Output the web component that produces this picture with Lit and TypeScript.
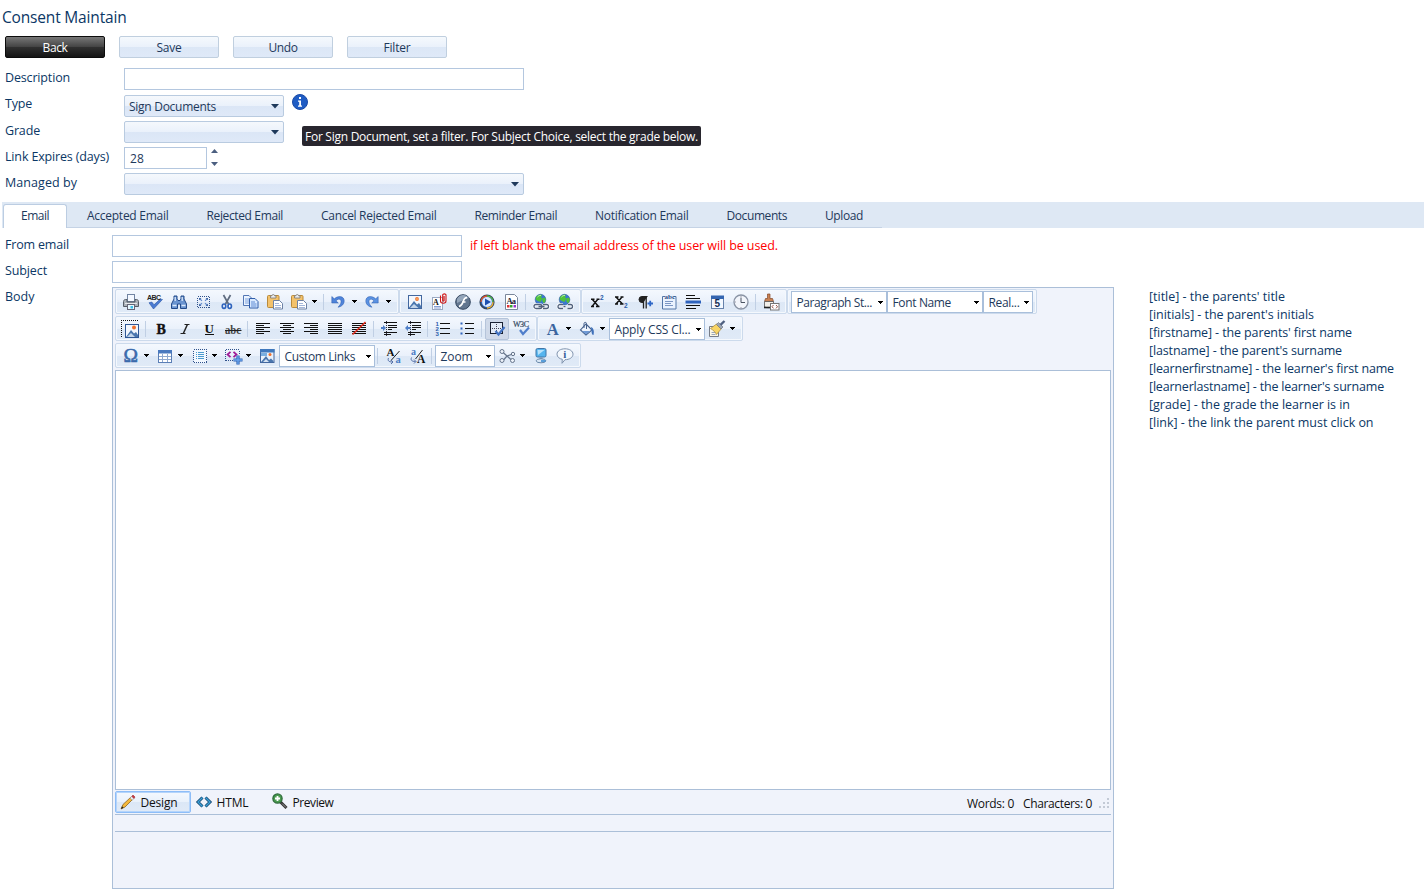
import { LitElement, html, svg, css, nothing } from "lit";
import { customElement, property } from "lit/decorators.js";

/* Text run whose tracking is computed so that it fills a given width. */
@customElement("fit-text")
class FitText extends LitElement {
  @property({ type: Number }) w = 0;
  static styles = css`
    :host { display: inline-block; white-space: pre; }
    span { display: inline-block; }
  `;
  firstUpdated() {
    const span = this.renderRoot.querySelector("span") as HTMLElement;
    const n = (this.textContent || "").length;
    const natural = span.getBoundingClientRect().width;
    if (n && natural && this.w) {
      const ls = (this.w - natural) / n;
      span.style.letterSpacing = ls.toFixed(3) + "px";
    }
  }
  render() {
    return html`<span><slot></slot></span>`;
  }
}

const t = (text: string, w: number) => html`<fit-text .w=${w}>${text}</fit-text>`;

const page = svg`<path d="M3.5 1.5h7l3 3v10h-10z" fill="#fff" stroke="#6c7f9c"/>`;
const globe = svg`<circle cx="7.500" cy="5.600" r="5.300" fill="#3c78d0" stroke="#2c5a9c" stroke-width=".6"/><path d="M3 3c2-2.500 5-2.500 6-2l-1 2.300 1.400 1.200-2 3.400-2.500-.8-2.200-1.600zM9.300 4.500l2.600-1 1 2.400-1.600 3.400-1.800-1.600z" fill="#4fc33a"/><path d="M4.500 3c1-1.300 2.500-1.700 3.500-1.500" stroke="#c9f2c0" fill="none"/>`;
const clip = svg`<rect x=".5" y="1.500" width="11.500" height="12" rx="1" fill="#f3c26c" stroke="#b98a3a"/><path d="M3.500 4V1.800h1.300C5 .1 7.500.1 7.700 1.800H9V4z" fill="#ececec" stroke="#777" stroke-width=".8"/><path d="M6.500 6.500h6l3 3v5.500h-9z" fill="#fff" stroke="#6d82a6"/><path d="M8 9.500h4M8 11.500h6M8 13.500h6" stroke="#8ba4d0" stroke-width=".8"/>`;
const picture = svg`<rect x="1.500" y="1.500" width="13" height="13" fill="#f3f7fd" stroke="#42679f"/><circle cx="10" cy="5" r="1.900" fill="#f0702c"/><circle cx="10" cy="5" r=".8" fill="#fbd08c"/><path d="M2 13.500 7 7l3 3.500L12 9l2 3v2H2z" fill="#4a76ae"/><path d="M3 14 7 10l4.500 4z" fill="#c3d5ea"/>`;
const lines = (xs: [number, number][]) =>
  svg`<g fill="#111" shape-rendering="crispEdges">${xs.map(([x, w], i) => svg`<rect x=${x} y=${2 + i * 2} width=${w} height="1"/>`)}</g>`;

const I: Record<string, unknown> = {
  print: svg`<rect x="4.500" y=".5" width="7" height="7" fill="#f4f8ff" stroke="#7184a2"/><path d="M.5 7.500c0-1 .8-2 2-2H4V8h8V5.500h1.500c1.200 0 2 1 2 2v5H.5z" fill="#aab0b8" stroke="#555c66"/><path d="M2 9.500h12" stroke="#e6e8ea"/><rect x="4.500" y="10.500" width="7" height="5" fill="#e8f8ff" stroke="#667"/><rect x="7.500" y="12" width="2.500" height="2.500" fill="#3bc0ea"/>`,
  spell: svg`<path d="M2 8.800 6.500 15 15.500 5.500l-2.500-.3-6 5.600-2.200-2.800z" fill="#4a7bd2" stroke="#2c55a4" stroke-width=".6"/><text x="0" y="5.500" font-size="7" font-weight="700" fill="#222" textLength="14" font-family="Liberation Sans">ABC</text>`,
  find: svg`<path d="M3 2h3v3l1 1.500h2L10 5V2h3v3l2.500 5v4.500h-6V10h-3v4.500h-6V10L3 5z" fill="#6a94d0" stroke="#234a8a"/><path d="M1.500 11.500h4M10.500 11.500h4M4.200 3v4M11.200 3v4" stroke="#dce9fb" stroke-width="1.300"/>`,
  selectall: svg`<g shape-rendering="crispEdges"><rect x="2.500" y="2.500" width="12" height="11" fill="none" stroke="#30528c" stroke-dasharray="1 1"/></g><path d="m4.500 4.500 2.500 2.300M12.500 4.500 10 6.800M4.500 11.500 7 9.200M12.500 11.500 10 9.200" stroke="#5f88cc" stroke-width="1.100"/><path d="M4 4h2.500L4 6.200zM13 4h-2.500L13 6.200zM4 12h2.500L4 9.800zM13 12h-2.500L13 9.800z" fill="#3d64a4"/>`,
  cut: svg`<path d="M4.500 1 9.500 10M11.500 1 6.500 10" stroke="#5f6c80" stroke-width="1.700" fill="none"/><ellipse cx="5" cy="12.200" rx="1.700" ry="2.200" fill="#fff" stroke="#2e63bd" stroke-width="1.700"/><ellipse cx="10.700" cy="12.200" rx="1.700" ry="2.200" fill="#fff" stroke="#2e63bd" stroke-width="1.700"/>`,
  copy: svg`<path d="M.5 1.500h5.500l3 3v7H.5z" fill="#eaf3ff" stroke="#5276b5"/><path d="M2 5h4M2 7h5M2 9h5" stroke="#7fa2dc"/><path d="M6.500 4.500H12l3 3v6.500H6.500z" fill="#d9e9ff" stroke="#2f5daa"/><path d="M8 8h4M8 10h5.500M8 12h5.500" stroke="#5e8bd3"/>`,
  paste: clip,
  undo: svg`<path d="M.8 2.500v6.500h6.500L5 6.800C7.500 4 10.500 5 10 8.200c-.3 2-1.500 3.500-3 5C11 12.500 13.200 10 13.200 6.700 13.200 2.300 7.500 1 3.300 4.800z" fill="#4f84da" stroke="#2a59ab" stroke-width=".5"/>`,
  redo: svg`<path d="M13.200 2.500v6.500H6.700L9 6.800C6.500 4 3.500 5 4 8.200c.3 2 1.500 3.500 3 5C3 12.500 .8 10 .8 6.700.8 2.300 6.500 1 10.700 4.800z" fill="#5a92e2" stroke="#2a59ab" stroke-width=".5"/>`,
  image: picture,
  doc: svg`<rect x="1.500" y="3.500" width="10" height="12" fill="#fff" stroke="#9aa9c2"/><text x="2" y="11" font-size="8" font-weight="700" fill="#111" font-family="Liberation Serif">A</text><path d="M3 12.500h7M3 14h7" stroke="#6787c8" stroke-width=".8"/><path d="M9.500 1.500V7c0 3 5.500 3 5.500 0V1c0-1.500-3.300-1.500-3.300 0v5.500c0 .8 1.400.8 1.400 0V2" fill="none" stroke="#d01818" stroke-width="1.100"/>`,
  flash: svg`<circle cx="8" cy="8" r="7.300" fill="#62768f" stroke="#33465f"/><path d="M2 5a7 7 0 0 1 12-1C10 5 6 7 2 9z" fill="#93a5ba"/><path d="M12 3.500c-3.500.4-3 2.500-4 4.500-.7 1.800-1.500 4-4 4.500M7 8h3.500" stroke="#fff" stroke-width="1.600" fill="none"/>`,
  media: svg`<circle cx="8" cy="8" r="6.700" fill="#2f6fd6" stroke="#33465f" stroke-width="1.800"/><path d="M8 2a6 6 0 0 1 6 6" stroke="#56b946" stroke-width="1.300" fill="none"/><path d="M14 8a6 6 0 0 1-6 6" stroke="#f0b030" stroke-width="1.300" fill="none"/><path d="M2 8a6 6 0 0 1 6-6" stroke="#e2562c" stroke-width="1.300" fill="none"/><circle cx="8" cy="8" r="4.900" fill="#dceafd"/><path d="M6 4.500 12 8l-6 3.500z" fill="#1d50b0"/>`,
  template: svg`<path d="M2.500.5h9l3 3v12h-12z" fill="#fff" stroke="#7a879b"/><text x="3.500" y="9.500" font-size="8.500" font-weight="700" fill="#223" font-family="Liberation Serif" textLength="9.500">Aa</text><rect x="4" y="11" width="2.500" height="2.500" fill="#d33"/><rect x="7" y="11" width="2.500" height="2.500" fill="#3a3"/><rect x="10.500" y="11" width="2.500" height="2.500" fill="#93c"/>`,
  link: svg`${globe}<path d="M3 10.500h4a2 2 0 0 1 0 4H3a2 2 0 0 1 0-4zM10 10.500h3.500a2 2 0 0 1 0 4H10M5.500 12.500h6" fill="none" stroke="#fff" stroke-width="2.600"/><path d="M3 10.500h4a2 2 0 0 1 0 4H3a2 2 0 0 1 0-4zM10 10.500h3.500a2 2 0 0 1 0 4H10M5.500 12.500h6" fill="none" stroke="#50617c" stroke-width="1.300"/>`,
  unlink: svg`${globe}<path d="M6 10.500H3a2 2 0 0 0 0 4h3M11 10.500h2.500a2 2 0 0 1 0 4H10.500M6.500 12.500h2" fill="none" stroke="#fff" stroke-width="2.600"/><path d="M6 10.500H3a2 2 0 0 0 0 4h3M11 10.500h2.500a2 2 0 0 1 0 4H10.500M6.500 12.500h2" fill="none" stroke="#50617c" stroke-width="1.300"/>`,
  sup: svg`<path d="M3 5 9.500 12.500M9 5 3 12.500M2 5.200h3.500M7.500 5.200h3M2 12.500h3M7 12.500h3.500" stroke="#111" stroke-width="1.400"/><text x="11" y="6" font-size="6.500" font-weight="700" fill="#2b5caa" font-family="Liberation Sans">2</text>`,
  sub: svg`<path d="M3 3 9.500 10M9 3 3 10M2 3h3.500M7.500 3h3M2 10h3M7 10h3.500" stroke="#111" stroke-width="1.400"/><text x="11" y="13.500" font-size="6.500" font-weight="700" fill="#2b5caa" font-family="Liberation Sans">2</text>`,
  para: svg`<path d="M10.500 2.500H5a3 3 0 0 0 0 6h1.500" fill="#222" stroke="#222"/><path d="M6.500 3v11.500M9.200 3v11.500" stroke="#222" stroke-width="1.300"/><path d="M10.500 9.500h5.500M13.200 6.800v5.500" stroke="#2e66c6" stroke-width="1.800"/>`,
  abc: svg`<path d="M1.500 2.500h13.500v12.500H1.500z" fill="#eaf3ff" stroke="#5276a8"/><path d="M4 7.500h8M4 9.500h6M4 11.500h8" stroke="#7c97c4"/><rect x="4" y="0" width="8.500" height="5" fill="#eaf3ff"/><text x="3.500" y="4.500" font-size="7" font-weight="700" fill="#2c4f86" font-family="Liberation Serif">abc</text>`,
  hr: svg`<path d="M1 1.500h9M1 4.500h14M1 11.500h14M1 14.500h10" stroke="#111"/><path d="M.5 8h15.500" stroke="#2e63bd" stroke-width="3"/>`,
  date: svg`<rect x="2.500" y="2.500" width="12" height="12" fill="#f4f8ff" stroke="#6682ab"/><rect x="2" y="1.500" width="13" height="3.500" fill="#3465b0"/><text x="5.500" y="13.300" font-size="10" font-weight="700" fill="#172d55" font-family="Liberation Sans">5</text>`,
  clock: svg`<circle cx="8" cy="8" r="7" fill="#f2f5fb" stroke="#8a94a5" stroke-width="1.300"/><path d="M8 3.500V8.500h4" stroke="#4a5362" fill="none"/><path d="M8 1.800v1M8 13.200v1M1.800 8h1" stroke="#889"/>`,
  clean: svg`<path d="M4.500 0H7v4.500h2.500l1 3h-9l1-3h2z" fill="#c98253" stroke="#84492a" stroke-width=".7"/><path d="M1.500 7.500h9v5c-2 1.500-7 1.500-9 .5z" fill="#f2efe9" stroke="#555" stroke-width=".8"/><path d="M1 13.500h6.500" stroke="#222" stroke-width="1.600"/><rect x="7.500" y="9.500" width="8.500" height="6.500" fill="#fff" stroke="#777"/><path d="m10.500 11-1.500 1.700 1.500 1.700M13 11l1.500 1.700-1.500 1.700" stroke="#8a4030" fill="none" stroke-width=".9"/>`,
  editor: svg`<path d="M-1.500 16V-.5H16" fill="none" stroke="#111" stroke-dasharray="1 1" shape-rendering="crispEdges"/><rect x="2.500" y="3.500" width="13" height="13" fill="#f3f7fd" stroke="#2f5795"/><circle cx="11" cy="6.500" r="2" fill="#f0702c"/><path d="M3 16 8 9l3 3.500L13 11l2 3v2z" fill="#4a76ae"/><path d="M4 16 8 12l4 4z" fill="#c3d5ea"/>`,
  bold: svg`<text x="3.500" y="13" font-size="14" font-weight="700" fill="#111" stroke="#111" stroke-width=".4" font-family="Liberation Serif">B</text>`,
  italic: svg`<path d="M10.300 3.800 6.300 12.500" stroke="#222" stroke-width="1.500"/><path d="M7.500 3.500h5M3.500 12.500h5" stroke="#222"/>`,
  underline: svg`<text x="3.500" y="11.500" font-size="13" font-weight="700" fill="#111" font-family="Liberation Serif">U</text><path d="M4 13.500h9" stroke="#111"/>`,
  strike: svg`<text x="0" y="13" font-size="12" font-weight="700" fill="#444" font-family="Liberation Serif" textLength="16" lengthAdjust="spacingAndGlyphs">abc</text><path d="M0 9.500h16.500" stroke="#222"/>`,
  left: lines([[1, 14], [1, 8], [1, 14], [1, 8], [1, 14], [1, 8]]),
  center: lines([[1, 14], [4, 8], [1, 14], [4, 8], [1, 14], [4, 8]]),
  right: lines([[1, 14], [7, 8], [1, 14], [7, 8], [1, 14], [7, 8]]),
  full: lines([[1, 14], [1, 14], [1, 14], [1, 14], [1, 14], [1, 14]]),
  none: svg`${lines([[1, 14], [1, 14], [1, 14], [1, 14], [1, 14], [1, 14]])}<path d="M1.500 13.500 14.500 1" stroke="#e02a1a" stroke-width="1.600"/>`,
  outdent: svg`<g shape-rendering="crispEdges" fill="#111"><path d="M3 1h13v1H3zM7 4h9v1H7zM7 6h9v1H7zM7 8h4v1H7zM3 11h13v1H3zM3 13h7v1H3z"/><path d="M5.500 0v15" stroke="#334" stroke-dasharray="1 1"/></g><path d="M0 7h3" stroke="#4f7fc8" stroke-width="2"/><path d="M2 4 5 7 2 10z" fill="#4f7fc8"/>`,
  indent: svg`<g shape-rendering="crispEdges" fill="#111"><path d="M3 1h13v1H3zM7 4h9v1H7zM7 6h9v1H7zM7 8h4v1H7zM3 11h13v1H3zM3 13h7v1H3z"/><path d="M5.500 0v15" stroke="#334" stroke-dasharray="1 1"/></g><path d="M2.500 7h3" stroke="#4f7fc8" stroke-width="2"/><path d="M3 4 0 7l3 3z" fill="#4f7fc8"/>`,
  ol: svg`<path d="M5 2.500h10M5 7.500h10M5 12.500h10" stroke="#111"/><g font-size="6" font-weight="700" fill="#2b5caa" font-family="Liberation Sans"><text x=".5" y="4.500">1</text><text x=".5" y="9.500">2</text><text x=".5" y="14.500">3</text></g>`,
  ul: svg`<path d="M6 2.500h9M6 7.500h9M6 12.500h9" stroke="#111"/><path d="M1.500 1.500h2v2h-2zM1.500 6.500h2v2h-2zM1.500 11.500h2v2h-2z" fill="#2e63bd"/>`,
  borders: svg`<rect x="1.500" y="1.500" width="12" height="11" fill="#e3ebf7" stroke="#1a2233"/><path d="M3 7.500h10M7.500 3v9" stroke="#445" stroke-dasharray="1 1"/><path d="M6.500 10 9.500 13.500l6-7.500" stroke="#4272c2" stroke-width="2.200" fill="none"/>`,
  w3c: svg`<text x="0" y="6" font-size="8" fill="#33485f" stroke="#33485f" stroke-width=".2" font-family="Liberation Serif" textLength="16">W3C</text><path d="M7 9 10 13 16 6.500" stroke="#4f7ecb" stroke-width="2.200" fill="none"/>`,
  color: svg`<text x="1.800" y="13.500" font-size="17" font-weight="700" fill="#3a659f" font-family="Liberation Serif" textLength="12" lengthAdjust="spacingAndGlyphs">A</text>`,
  fill: svg`<path d="M7 3 13 9l-6 5-5.500-5z" fill="#eef4fd" stroke="#45618d" stroke-width="1.100"/><path d="M3 10h8.500L7 13.500z" fill="#6e98d4"/><path d="M5 7V2.500c0-1.500 2.500-1.500 2.500 0V8" fill="none" stroke="#45618d"/><path d="M12 6c2.500 1 3.500 4 2.500 8-1.500 0-2-2-2-4.500z" fill="#3e70ba"/>`,
  brush: svg`<path d="M.5 5.500h9v10h-9z" fill="#fbf7e6" stroke="#777d88"/><path d="M2.500 11.500h5M2.500 13.500h4" stroke="#9aa7ba"/><path d="M1.500 7.500 7.500 3l5 4.500-5 6c-1-2.500-3.500-4.500-6-6z" fill="#f8d566" stroke="#a98a3c" stroke-width=".7"/><path d="M7.500 3.500l4.500 4.500 2-2-4.500-4.500z" fill="#9da5b3" stroke="#626978" stroke-width=".6"/><path d="M11.500 3.800 15.500 0" stroke="#4d5f80" stroke-width="2.400"/>`,
  omega: svg`<text x=".5" y="14" font-size="19" fill="#3a6aac" stroke="#3a6aac" stroke-width=".6" font-family="Liberation Serif" textLength="14.500" lengthAdjust="spacingAndGlyphs">Ω</text>`,
  table: svg`<rect x="1.500" y="2.500" width="13" height="12" fill="#fff" stroke="#5b7fb6"/><path d="M1 2h14v3.500H1z" fill="#4979bf"/><path d="M2 8.500h12M2 11.500h12M5.500 6v8M10.500 6v8" stroke="#8fa9d0"/>`,
  block: svg`<rect x="2.500" y="1.500" width="13" height="13" fill="#f2f8ff" stroke="#30528c" stroke-dasharray="1 1" shape-rendering="crispEdges"/><path d="M5 4.500h1M5 6.500h1M5 8.500h1M5 10.500h1M7 4.500h6M7 6.500h6M7 8.500h6M7 10.500h6" stroke="#4b9bd0"/>`,
  snippet: svg`<path d="M.5 13V1.500H14V7M.5 12.500h8" fill="none" stroke="#30528c" stroke-dasharray="1 1" shape-rendering="crispEdges"/><path d="M5.500 3.800 2.500 6.500l3 2.700M8.500 3.800l3 2.700-3 2.700" stroke="#a01a96" stroke-width="1.800" fill="none"/><path d="M8.500 12h9M13 7.500v9" stroke="#2d62b4" stroke-width="3.200"/><path d="M9 12h8M13 8v8" stroke="#6aa4ec" stroke-width="1.400"/>`,
  map: svg`<rect x="1.500" y="1.500" width="13.500" height="13" fill="#e9f1fb" stroke="#42679f"/><path d="M1 1h14.500v3.500H1z" fill="#3f78bd"/><path d="M2 5h6v3H2z" fill="#79aee0"/><circle cx="11" cy="6.500" r="1.500" fill="#f0702c"/><path d="M2 14 7 8l3 4 2-1.500 2.500 2.500v1z" fill="#4a76ae"/><path d="M4 14l3-3 3 3z" fill="#d4e2f2"/>`,
  lower: svg`<text x="1.500" y="7.500" font-size="11" font-weight="700" fill="#111" font-family="Liberation Serif">A</text><text x="10.500" y="14.500" font-size="10.500" font-weight="700" fill="#4a7cc4" font-family="Liberation Serif">a</text><path d="M14.500 3 6 12.500" stroke="#222"/><path d="M3.500 10c-1 2.500 0 4 4 4M6 12l2 2-2 2" stroke="#5570a8" fill="none"/>`,
  upper: svg`<text x="2" y="6.500" font-size="10" font-weight="700" fill="#4a7cc4" font-family="Liberation Serif">a</text><text x="8" y="14.500" font-size="11.500" font-weight="700" fill="#111" font-family="Liberation Serif">A</text><path d="M13.500 2 6.500 11" stroke="#222"/><path d="M2.500 9.500c-1 2.500 0 4 4 4M5 11.500l2 2-2 2" stroke="#5570a8" fill="none"/>`,
  xform: svg`<path d="M3 3.500 8 8l6-2M8 8 4 12.500M8 8l5 4.500" stroke="#66758c" stroke-width="1.200" fill="none"/><g fill="#edf2fa" stroke="#66758c"><circle cx="3" cy="3.500" r="2"/><circle cx="3" cy="12.500" r="2"/><circle cx="13.500" cy="12.500" r="2"/><circle cx="14" cy="6" r="1.700"/></g>`,
  monitor: svg`<rect x="3" y=".5" width="10" height="8.500" rx="1.500" fill="#55b4ee" stroke="#4176a8"/><path d="M4.500 2h7L5 7z" fill="#b8e2fb"/><path d="M6.500 9.500h3v2h-3z" fill="#7590ae"/><ellipse cx="8" cy="12.800" rx="4.800" ry="2" fill="#d9e7f5" stroke="#6988aa"/><path d="M8 13h4.500" stroke="#2f87d2" stroke-width="1.500"/>`,
  about: svg`<path d="M8 .8c4.500 0 8 2.200 8 5.400s-3.500 5.500-8 5.500L5 15.300l.3-4C2.500 10.800 0 9 0 6.200 0 3 3.500.8 8 .8z" fill="#f4f8fd" stroke="#7f93ae"/><text x="6.300" y="10.300" font-size="11" font-weight="700" fill="#375f9b" font-family="Liberation Serif">i</text>`,
  pencil: svg`<path d="M1 15 3 10.500l8-7.500 2 2-8 8z" fill="#f5b83a" stroke="#8d6620" stroke-width=".8"/><path d="m1 15 1-2.700 1.700 1.500z" fill="#222"/><path d="m10 4 2.200 2.200L14 4.500 11.800 2.200z" fill="#e8eaf0" stroke="#888" stroke-width=".5"/><path d="M11.800 2.200 13 1l2 2-1 1.500z" fill="#d0333c" stroke="#8c2026" stroke-width=".5"/>`,
  code: svg`<path d="M6.500 3.500 2 8l4.500 4.500M9.500 3.500 14 8l-4.500 4.500" fill="none" stroke="#16466f" stroke-width="3"/><path d="M6.500 3.500 2 8l4.500 4.500M9.500 3.500 14 8l-4.500 4.500" fill="none" stroke="#3ba0d8" stroke-width="1.400"/>`,
  zoom: svg`<path d="m8.500 8 6 6" stroke="#333" stroke-width="3"/><path d="m10 9.500 4 4" stroke="#999" stroke-width="1"/><circle cx="5.500" cy="4.500" r="4.600" fill="#4a9b50" stroke="#2c6a38" stroke-width="1.300"/><path d="M3 4.500h5M5.500 2v5" stroke="#fff" stroke-width="1.800"/>`,
};

const icon = (name: string) =>
  html`<svg class="ico" viewBox="0 0 16 16" width="16" height="16">${I[name] ?? page}</svg>`;
const arrow = html`<svg class="arr" width="5" height="3" viewBox="0 0 5 3"><path d="M0 0h5v1H4v1H3v1H2V2H1V1H0z" fill="#000"/></svg>`;

type Item = string | [string, number, number];
const toolbars: Item[][][] = [
  [
    ["print", "spell", "find", "selectall", "cut", "copy", "paste", "paste+", "|", "undo+", "redo+"],
    ["image", "doc", "flash", "media", "template", "|", "link", "unlink"],
    ["sup", "sub", "para", "abc", "hr", "date", "clock", "|", "clean"],
    [["Paragraph St...", 96, 75.5], ["Font Name", 96, 58.5], ["Real...", 50, 31]],
  ],
  [
    ["editor", "|", "bold", "italic", "underline", "strike", "|", "left", "center", "right", "full", "none", "|", "outdent", "indent", "|", "ol", "ul", "|", "borders", "w3c"],
    ["color+", "fill+", ["Apply CSS Cl...", 96, 76], "brush+"],
  ],
  [
    ["omega+", "table+", "block+", "snippet+", "map", ["Custom Links", 96, 70.5], "|", "lower", "upper", "|", ["Zoom", 60, 32], "xform+", "monitor", "about"],
  ],
];

const item = (i: Item) => {
  if (typeof i !== "string")
    return html`<div class="combo" style="width:${i[1]}px">${t(i[0], i[2])}${arrow}</div>`;
  if (i === "|") return html`<i class="sep"></i>`;
  const split = i.endsWith("+");
  return html`<div class="tool ${split ? "split" : ""} ${i === "borders" ? "on" : ""}">
    ${icon(split ? i.slice(0, -1) : i)}${split ? arrow : nothing}
  </div>`;
};

const tabs: [string, number][] = [
  ["Email", 28], ["Accepted Email", 81.5], ["Rejected Email", 76.5], ["Cancel Rejected Email", 115.5],
  ["Reminder Email", 82.500], ["Notification Email", 93.500], ["Documents", 60.500], ["Upload", 38],
];
const legend: [string, number][] = [
  ["[title] - the parents' title", 136], ["[initials] - the parent's initials", 165],
  ["[firstname] - the parents' first name", 203], ["[lastname] - the parent's surname", 193],
  ["[learnerfirstname] - the learner's first name", 245], ["[learnerlastname] - the learner's surname", 235],
  ["[grade] - the grade the learner is in", 201], ["[link] - the link the parent must click on", 224.500],
];

@customElement("app-root")
class AppRoot extends LitElement {
  static styles = css`
    :host { display: block; width: 1424px; height: 894px; overflow: hidden; position: relative; background: #fff;
      font: 12.500px/18px "Open Sans", "Noto Sans", sans-serif; color: #0b3765; box-sizing: border-box; }
    * { box-sizing: border-box; }
    svg { display: block; flex: none; overflow: visible; }
    .title { height: 36px; padding: 6px 0 0 2px; font-size: 15.500px; line-height: 22px; }
    .buttons { display: flex; gap: 14px; padding-left: 5px; height: 22px; }
    .btn { width: 100px; height: 22px; border: 1px solid #c0cfdf; border-radius: 2px; display: flex; justify-content: center;
      font-size: 12px; line-height: 21px; color: #1e395b;
      background: linear-gradient(#f5f9fd, #eaf1fb 50%, #dce7f6 51%, #dfe9f8); }
    .dark { color: #fff; border-color: #0c0c0c; background: linear-gradient(#777, #454545 48%, #303030 51%, #151515); }
    .form { padding-top: 10px; display: flex; flex-direction: column; gap: 4px; }
    .row { display: flex; height: 22px; padding-left: 5px; }
    .row.first { margin-bottom: 1px; }
    .label { width: 119px; flex: none; line-height: 19px; }
    .up .label { line-height: 17px; }
    .pane .label { width: 107px; }
    .input { height: 22px; border: 1px solid #b4c7df; background: #fff; width: 400px; padding-left: 5px; line-height: 22px; font-size: 12px; color: #1e395b; }
    .input.mid { width: 350px; }
    .input.small { width: 83px; }
    .select { height: 22px; width: 160px; border: 1px solid #b9cbe0; border-radius: 2px; display: flex; align-items: center;
      justify-content: space-between; padding: 0 4px 0 4px; font-size: 12px; color: #1e395b;
      background: linear-gradient(#f5f8fc, #eaf1fb 50%, #dbe6f6 51%, #dfe9f8); }
    .select fit-text { line-height: 18px; padding-top: 2px; }
    .select.wide { width: 400px; }
    .info { margin: -1px 0 0 8px; }
    .spin { display: flex; flex-direction: column; justify-content: space-between; padding: 2px 0 3px 4px; height: 22px; }
    .tip { position: absolute; left: 302px; top: 126px; width: 399px; height: 20px; background: #28262e; color: #fff;
      border-radius: 2px; padding-left: 3px; line-height: 22px; font-size: 12px; white-space: nowrap; }
    .strip { margin: 7px 0 0 2px; height: 26px; background: #dee8f4; display: flex; padding: 2px 0 0 1px; font-size: 12px; }
    .tabs { display: flex; width: 879px; border-bottom: 1px solid #c5d3e5; }
    .tab { padding-left: 38px; line-height: 24px; height: 24px; flex: none; color: #1e395b; }
    .tab.second { padding-left: 20px; }
    .tab.active { width: 64px; padding-left: 17px; background: #fff; border: 1px solid #bccde2; border-bottom: 0; border-radius: 3px 3px 0 0; line-height: 22px; }
    .pane { padding-top: 7px; display: flex; flex-direction: column; gap: 4px; }
    .red { color: #f00; padding-left: 8px; line-height: 21px; }
    .row.body { height: 602px; }
    .editor { width: 1002px; height: 602px; flex: none; background: #f0f3fb; border: 1px solid #abbfd8; padding: 1px 2px; display: flex; flex-direction: column; }
    .bars { display: flex; flex-direction: column; gap: 2px; height: 81px; }
    .bar { display: flex; height: 25px; }
    .group { display: flex; align-items: flex-start; height: 25px; border: 1px solid #ccdaec; border-radius: 2px; padding: 1px 3px 0;
      background: linear-gradient(#f4f8fe, #eaf1fb 50%, #dde8f6 51%, #e0eaf7); box-shadow: inset 0 0 0 1px #f4f8fd; }
    .tool { width: 24px; height: 22px; display: flex; align-items: flex-start; padding: 3px 0 0 4px; flex: none; }
    .split { width: 34px; }
    .split .arr { margin: 6px 0 0 5px; }
    .on { background: #cfd9e9; border: 1px solid #b5c4da; border-radius: 2px; padding: 2px 0 0 3px; }
    .sep { width: 1px; height: 16px; background: #c0cfe4; margin: 3px 3px 0 2px; flex: none; }
    .combo { height: 22px; border: 1px solid #a9bfdb; background: #fff; display: flex; align-items: center; justify-content: space-between;
      padding: 0 3px 0 4.500px; font-size: 12px; color: #1e395b; flex: none; }
    .combo fit-text { line-height: 18px; padding-top: 2px; }
    .canvas { height: 420px; background: #fff; border: 1px solid #abbfd8; width: 996px; }
    .modes { height: 25px; display: flex; align-items: flex-start; padding-top: 1px; color: #111; font-size: 12px; line-height: 22px; border-bottom: 1px solid #abbfd8; }
    .mode { display: flex; height: 22px; align-items: center; gap: 4.500px; padding-left: 5px; width: 76px; }
    .mode fit-text { line-height: 20px; padding-top: 2px; }
    .mode.cur { border: 1px solid #8dbdf8; box-shadow: inset 0 0 0 1px #b4d4fb; border-radius: 2px; padding-left: 4px; background: linear-gradient(#f4f8fe, #e9f1fb 50%, #dbe7f6 51%, #e0eaf7); }
    .mode.last { width: 90px; }
    .count { margin-left: auto; display: flex; gap: 9px; padding-top: 2px; }
    .grip { margin: 4px 1px 0 -3px; }
    .sub { height: 17px; border-bottom: 1px solid #abbfd8; flex: none; }
    .legend { margin-left: 35px; padding-top: 1px; line-height: 18px; display: flex; flex-direction: column; }
    .legend fit-text { height: 18px; }
  `;
  render() {
    const caret = html`<svg width="8" height="5" viewBox="0 0 8 5"><path d="M0 0h8L4 4.500z" fill="#1e395b"/></svg>`;
    return html`
      <div class="title">${t("Consent Maintain", 124.5)}</div>
      <div class="buttons">
        <div class="btn dark">${t("Back", 25)}</div>
        <div class="btn">${t("Save", 25)}</div>
        <div class="btn">${t("Undo", 29)}</div>
        <div class="btn">${t("Filter", 27)}</div>
      </div>
      <div class="form">
        <div class="row first"><div class="label">${t("Description", 65)}</div><div class="input"></div></div>
        <div class="row up"><div class="label">${t("Type", 27)}</div>
          <div class="select">${t("Sign Documents", 87)}${caret}</div>
          <svg class="info" width="16" height="16" viewBox="0 0 16 16"><circle cx="8" cy="8" r="7.500" fill="#1f5cc4" stroke="#1a4aa6"/><path d="M7 3h2v2H7zM6 6.500h3v5h1v1.300H6v-1.300h1.200V7.800H6z" fill="#fff"/></svg>
        </div>
        <div class="row"><div class="label">${t("Grade", 35)}</div><div class="select"><span></span>${caret}</div></div>
        <div class="row"><div class="label">${t("Link Expires (days)", 104)}</div><div class="input small">${t("28", 14)}</div>
          <div class="spin">
            <svg width="7" height="4" viewBox="0 0 7 4"><path d="M0 4h7L3.500 0z" fill="#4b5f80"/></svg>
            <svg width="7" height="4" viewBox="0 0 7 4"><path d="M0 0h7L3.500 4z" fill="#4b5f80"/></svg>
          </div>
        </div>
        <div class="row"><div class="label">${t("Managed by", 72)}</div><div class="select wide"><span></span>${caret}</div></div>
      </div>
      <div class="strip"><div class="tabs">
        ${tabs.map(([n, w], i) => html`<div class="tab ${i === 0 ? "active" : i === 1 ? "second" : ""}">${t(n, w)}</div>`)}
      </div></div>
      <div class="pane">
        <div class="row"><div class="label">${t("From email", 64)}</div><div class="input mid"></div>
          <div class="red">${t("if left blank the email address of the user will be used.", 308)}</div></div>
        <div class="row"><div class="label">${t("Subject", 42)}</div><div class="input mid"></div></div>
        <div class="row body"><div class="label">${t("Body", 29.5)}</div>
          <div class="editor">
            <div class="bars">
              ${toolbars.map((b) => html`<div class="bar">${b.map((g) => html`<div class="group">${g.map(item)}</div>`)}</div>`)}
            </div>
            <div class="canvas"></div>
            <div class="modes">
              <div class="mode cur">${icon("pencil")}${t("Design", 37)}</div>
              <div class="mode">${icon("code")}${t("HTML", 32)}</div>
              <div class="mode last">${icon("zoom")}${t("Preview", 41)}</div>
              <div class="count">${t("Words: 0", 47)}${t("Characters: 0", 69)}
                <svg class="grip" width="12" height="12" viewBox="0 0 12 12"><path d="M9 1h2v2H9zM9 5h2v2H9zM9 9h2v2H9zM5 5h2v2H5zM5 9h2v2H5zM1 9h2v2H1z" fill="#c3cad6"/></svg>
              </div>
            </div>
            <div class="sub"></div>
          </div>
          <div class="legend">${legend.map(([s, w]) => html`${t(s, w)}`)}</div>
        </div>
      </div>
      <div class="tip">${t("For Sign Document, set a filter. For Subject Choice, select the grade below.", 393)}</div>
    `;
  }
}
